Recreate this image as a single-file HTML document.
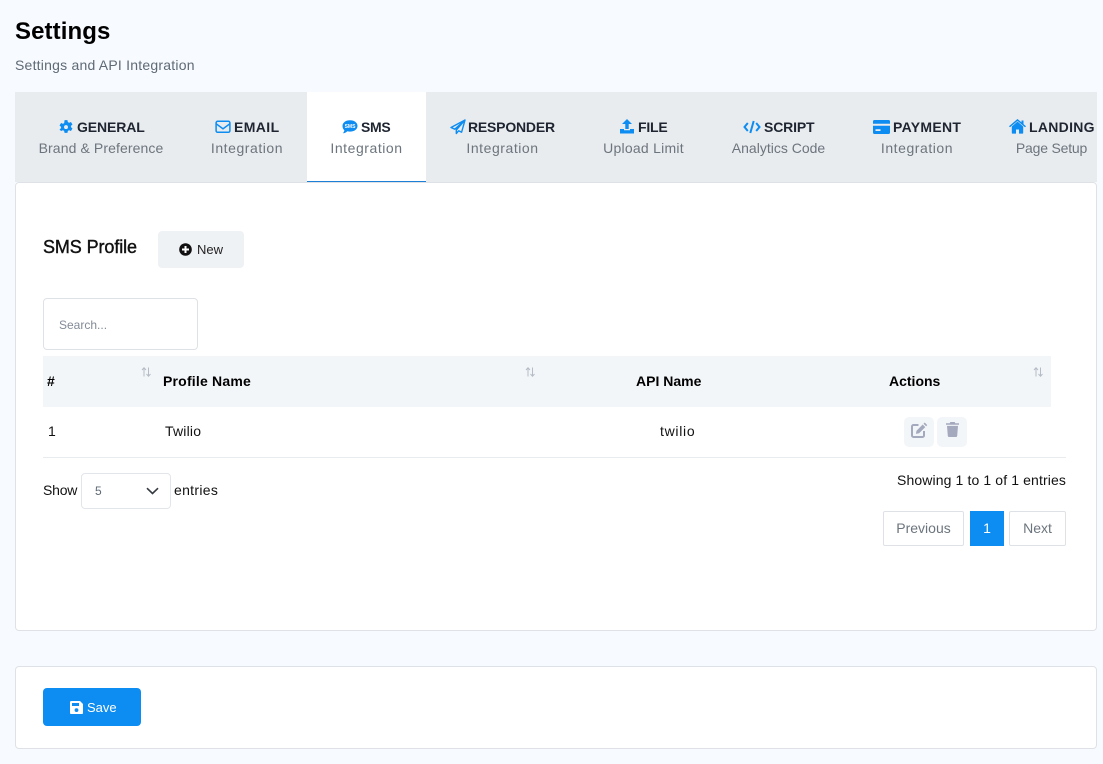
<!DOCTYPE html>
<html><head><meta charset="utf-8"><title>Settings</title>
<style>
*{box-sizing:border-box}
html,body{margin:0;padding:0}
body{width:1103px;height:764px;background:#f7faff;font-family:"Liberation Sans",sans-serif;position:relative;overflow:hidden;color:#000}
.a{position:absolute;white-space:nowrap}
.c{text-align:center}
.tt{font-size:14px;font-weight:700;color:#1e2530;line-height:18px;top:118px}
.ts{font-size:14px;color:#6c757d;line-height:18px;top:139px}
svg{position:absolute;display:block}
.b{fill:#0d8cf1}
.th{font-size:14px;font-weight:700;line-height:18px;top:372px}
.td{font-size:14px;line-height:18px;top:422px;color:#111}
.in{letter-spacing:.55px}
</style></head><body>
<div class="a" style="left:15px;top:17px;font-size:24px;font-weight:700;line-height:30px;letter-spacing:.1px">Settings</div>
<div class="a" style="left:15px;top:56px;font-size:14px;color:#5f6a75;line-height:18px;letter-spacing:.22px">Settings and API Integration</div>

<div class="a" style="left:15px;top:92px;width:1082px;height:90px;background:#e9ecef"></div>
<div class="a" style="left:307px;top:92px;width:119px;height:90px;background:#fff;border-bottom:1px solid #1e7fd6"></div>

<svg style="left:59px;top:120px" width="14" height="14" viewBox="1.500 .7 13 13.600"><path class="b" fill-rule="evenodd" d="M6.600 .8h2.800l.4 2 1.200.6 1.800-.8 1.500 2.500-1.500 1.300v1.200l1.500 1.300-1.500 2.500-1.800-.8-1.200.7-.4 1.900H6.600l-.4-1.900-1.200-.7-1.800.8L1.700 9.900l1.500-1.300V7.400L1.700 6.100l1.500-2.500 1.800.8 1.200-.6zM8 5.700a1.900 1.900 0 1 0 0 3.800 1.900 1.900 0 0 0 0-3.800z"/></svg>
<div class="a tt" style="left:77px;letter-spacing:-.1px">GENERAL</div>
<div class="a ts c" style="left:15px;width:172px;letter-spacing:.1px">Brand &amp; Preference</div>

<svg style="left:215px;top:120px" width="16" height="14" viewBox="0 0 16 14"><rect x="1.100" y="1.300" width="13.800" height="11" rx="1.500" fill="none" stroke="#0d8cf1" stroke-width="1.500"/><path d="M1.200 3.800L8 8.800l6.800-5" fill="none" stroke="#0d8cf1" stroke-width="1.500"/></svg>
<div class="a tt" style="left:234px;letter-spacing:.4px">EMAIL</div>
<div class="a ts c in" style="left:187px;width:120px">Integration</div>

<svg style="left:342px;top:120px" width="16" height="14" viewBox="0 0 16 14"><path class="b" d="M8 .2c4.300 0 7.500 2.400 7.500 5.700s-3.200 5.700-7.500 5.700c-1 0-1.900-.1-2.700-.4C4.300 12.200 2.800 13.200 1 13.200c.7-.8 1.200-1.800 1.400-2.900C1.200 9.200.5 7.700.5 5.900.5 2.600 3.700.2 8 .2z"/><text x="8" y="8" font-size="5" font-weight="700" fill="#fff" text-anchor="middle" font-family="Liberation Sans">SMS</text></svg>
<div class="a tt" style="left:361px;letter-spacing:-.3px">SMS</div>
<div class="a ts c in" style="left:307px;width:119px">Integration</div>

<svg style="left:450px;top:119px" width="16" height="16" viewBox="0 0 16 16"><path d="M15 1L1 8.500l3.800 1.700L15 1 6.300 11v3.500l2.300-2.700 3 1.400z" fill="none" stroke="#0d8cf1" stroke-width="1.400" stroke-linejoin="round"/></svg>
<div class="a tt" style="left:468px;letter-spacing:-.2px">RESPONDER</div>
<div class="a ts c in" style="left:426px;width:153px">Integration</div>

<svg style="left:619px;top:119px" width="16" height="15" viewBox="0 0 16 15"><path class="b" d="M8 0l5 5H9.700v5H6.300V5H3zM1 10h4v1.300h6V10h4v4.500H1z"/></svg>
<div class="a tt" style="left:638px;letter-spacing:-.2px">FILE</div>
<div class="a ts c" style="left:579px;width:129px;letter-spacing:.25px">Upload Limit</div>

<svg style="left:743px;top:120px" width="18" height="14" viewBox="0 0 18 14"><path d="M4.800 3L1.500 7l3.300 4M13.200 3l3.300 4-3.300 4M10.700 1L7.300 13" fill="none" stroke="#0d8cf1" stroke-width="2"/></svg>
<div class="a tt" style="left:764px;letter-spacing:-.15px">SCRIPT</div>
<div class="a ts c" style="left:708px;width:141px">Analytics Code</div>

<svg style="left:873px;top:120px" width="17" height="14" viewBox="0 0 17 14"><path class="b" d="M1.500 0h14A1.500 1.500 0 0 1 17 1.500V3.700H0V1.500A1.500 1.500 0 0 1 1.500 0zM0 5.700h17v6.800a1.500 1.500 0 0 1-1.500 1.500h-14A1.500 1.500 0 0 1 0 12.500zM2.500 9.300V11h5V9.300z"/></svg>
<div class="a tt" style="left:893px;letter-spacing:.3px">PAYMENT</div>
<div class="a ts c in" style="left:849px;width:136px">Integration</div>

<svg style="left:1009px;top:119px" width="17" height="15" viewBox="0 0 17 15"><path class="b" d="M8.500 2.500L2.800 7.500V14a.6.6 0 0 0 .6.600H7V10.500h3V14.600h3.600a.6.600 0 0 0 .6-.6V7.500zM8.500 0L0 7.200l1 1.100 7.500-6.400L16 8.300l1-1.100-2.500-2.100V1.500h-2v1.900z"/></svg>
<div class="a tt" style="left:1029px;letter-spacing:.3px">LANDING</div>
<div class="a ts c" style="left:985px;width:133px;letter-spacing:-.2px">Page Setup</div>

<div class="a" style="left:15px;top:182px;width:1082px;height:449px;background:#fff;border:1px solid #dee2e6;border-radius:4px"></div>
<div class="a" style="left:307px;top:181px;width:119px;height:1px;background:#1e7fd6"></div>

<div class="a" style="left:43px;top:236px;font-size:18px;font-weight:400;line-height:22px;color:#111;-webkit-text-stroke:.4px #111;letter-spacing:-.1px">SMS Profile</div>
<div class="a" style="left:158px;top:231px;width:86px;height:37px;background:#eff2f5;border-radius:4px"></div>
<svg style="left:179px;top:243px" width="13" height="13" viewBox="0 0 13 13"><circle cx="6.500" cy="6.500" r="6.300" fill="#111"/><path d="M6.500 3v7M3 6.500h7" stroke="#fff" stroke-width="2"/></svg>
<div class="a" style="left:197px;top:241px;font-size:13px;line-height:17px;color:#222">New</div>

<div class="a" style="left:43px;top:298px;width:155px;height:52px;background:#fff;border:1px solid #dee2e6;border-radius:4px"></div>
<div class="a" style="left:59px;top:317px;font-size:12px;line-height:16px;color:#838b97">Search...</div>

<div class="a" style="left:43px;top:356px;width:1008px;height:51px;background:#f3f6f9"></div>
<div class="a th" style="left:47px">#</div>
<div class="a th" style="left:163px;letter-spacing:.2px">Profile Name</div>
<div class="a th" style="left:636px">API Name</div>
<div class="a th" style="left:889px">Actions</div>
<svg style="left:141px;top:367px" width="10" height="10" viewBox="0 0 10 10"><path d="M3 9.500V1M1 3l2-2.200L5 3M7.500 .5V9M5.500 7l2 2.200 2-2.200" fill="none" stroke="#b5bcc6" stroke-width="1"/></svg>
<svg style="left:525px;top:367px" width="10" height="10" viewBox="0 0 10 10"><path d="M3 9.500V1M1 3l2-2.200L5 3M7.500 .5V9M5.500 7l2 2.200 2-2.200" fill="none" stroke="#b5bcc6" stroke-width="1"/></svg>
<svg style="left:1033px;top:367px" width="10" height="10" viewBox="0 0 10 10"><path d="M3 9.500V1M1 3l2-2.200L5 3M7.500 .5V9M5.500 7l2 2.200 2-2.200" fill="none" stroke="#b5bcc6" stroke-width="1"/></svg>

<div class="a td" style="left:48px">1</div>
<div class="a td" style="left:165px;letter-spacing:.2px">Twilio</div>
<div class="a td" style="left:660px;letter-spacing:.7px">twilio</div>

<div class="a" style="left:904px;top:417px;width:30px;height:30px;background:#f3f6f9;border-radius:5px"></div>
<div class="a" style="left:937px;top:417px;width:30px;height:30px;background:#f3f6f9;border-radius:5px"></div>
<svg style="left:911px;top:422px" width="17" height="16" viewBox="0 0 17 16"><path d="M7.500 3H2.500A1.500 1.500 0 0 0 1 4.500v9A1.500 1.500 0 0 0 2.500 15h9a1.500 1.500 0 0 0 1.500-1.500V9" fill="none" stroke="#a5a9bd" stroke-width="2"/><path fill="#a5a9bd" d="M13.700.5l2.600 2.600-1.200 1.200-2.600-2.600zM11.700 2.500l2.600 2.600-6.200 6.200-3.200.6.600-3.200z"/></svg>
<svg style="left:946px;top:422px" width="13" height="15" viewBox="0 0 13 15"><path fill="#a5a9bd" d="M4.300 0h4.400l.6 1.200H13v1.600H0V1.200h3.700zM1 3.900h11l-.8 10a1.200 1.200 0 0 1-1.200 1.100H3a1.200 1.200 0 0 1-1.200-1.100z"/></svg>

<div class="a" style="left:43px;top:457px;width:1023px;height:1px;background:#e9ecef"></div>

<div class="a" style="left:43px;top:481px;font-size:14px;line-height:18px;color:#111;letter-spacing:-.2px">Show</div>
<div class="a" style="left:81px;top:473px;width:90px;height:36px;background:#fff;border:1px solid #e2e5ea;border-radius:4px"></div>
<div class="a" style="left:95px;top:483px;font-size:12px;line-height:16px;color:#5f6a75">5</div>
<svg style="left:146px;top:487px" width="13" height="8" viewBox="0 0 13 8"><path d="M1 1.200l5.500 5.300L12 1.200" fill="none" stroke="#343a40" stroke-width="1.600"/></svg>
<div class="a" style="left:174px;top:481px;font-size:14px;line-height:18px;color:#111;letter-spacing:.3px">entries</div>

<div class="a" style="right:37px;top:471px;font-size:14px;line-height:18px;color:#111;letter-spacing:.12px">Showing 1 to 1 of 1 entries</div>
<div class="a c" style="left:883px;top:511px;width:81px;height:35px;background:#fff;border:1px solid #dee2e6;border-radius:2px;font-size:14px;line-height:33px;color:#6c757d">Previous</div>
<div class="a c" style="left:970px;top:511px;width:34px;height:35px;background:#0d8cf1;font-size:14px;line-height:35px;color:#fff">1</div>
<div class="a c" style="left:1009px;top:511px;width:57px;height:35px;background:#fff;border:1px solid #dee2e6;border-radius:2px;font-size:14px;line-height:33px;color:#6c757d">Next</div>

<div class="a" style="left:15px;top:666px;width:1082px;height:83px;background:#fff;border:1px solid #dee2e6;border-radius:4px"></div>
<div class="a" style="left:43px;top:688px;width:98px;height:38px;background:#0d8cf1;border-radius:4px"></div>
<svg style="left:70px;top:701px" width="13" height="13" viewBox="0 0 13 13"><path fill="#fff" fill-rule="evenodd" d="M1.300 0h8.700L13 3v8.700A1.300 1.300 0 0 1 11.700 13H1.300A1.300 1.300 0 0 1 0 11.700V1.300A1.300 1.300 0 0 1 1.300 0zM2 2v3h7V2zM6.500 7.200a1.900 1.900 0 1 0 0 3.800 1.900 1.900 0 0 0 0-3.800z"/></svg>
<div class="a" style="left:87px;top:699px;font-size:13px;line-height:17px;color:#fff">Save</div>
</body></html>
